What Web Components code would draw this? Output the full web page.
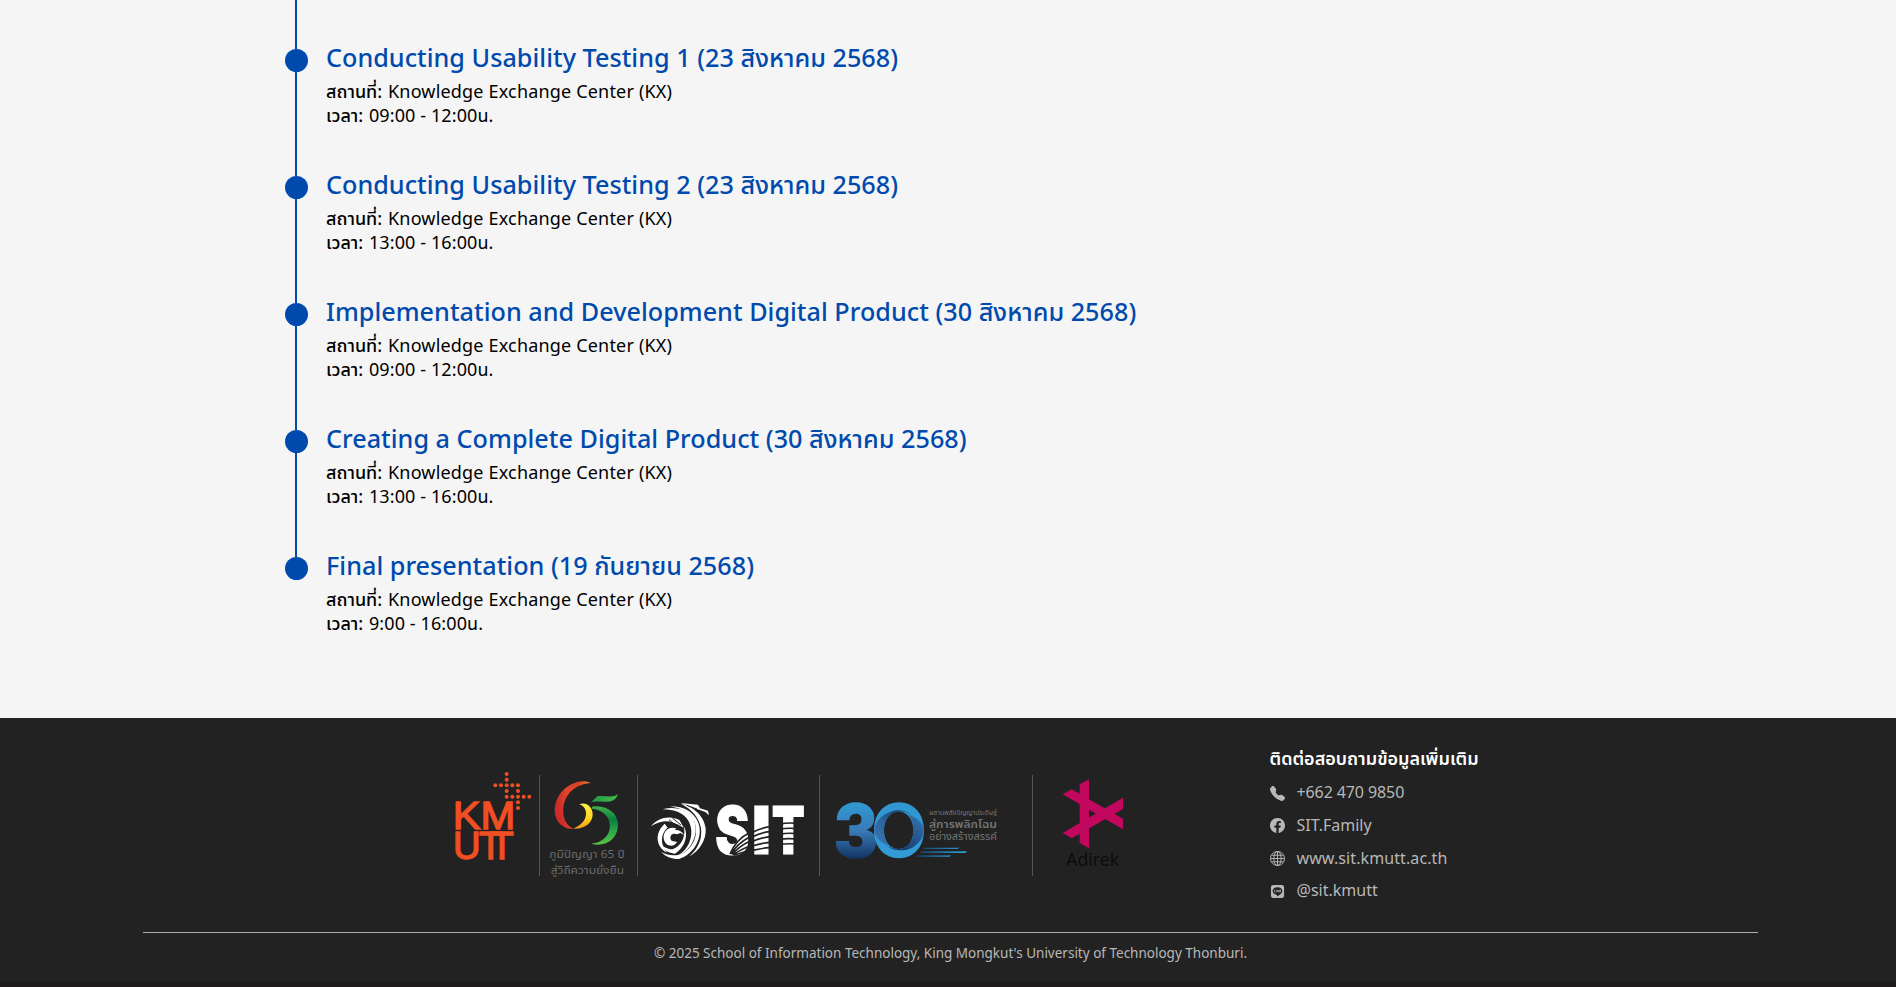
<!DOCTYPE html>
<html lang="th">
<head>
<meta charset="utf-8">
<title>School of Information Technology</title>
<style>
html,body{margin:0;background:#f5f5f5}
body{font-family:"Noto Sans","Noto Sans Thai",sans-serif;color:#000;height:987px;overflow:hidden}
</style>
</head>
<body>
<schedule-page></schedule-page>
<script>
const define=(name,html)=>customElements.define(name,class extends HTMLElement{
  constructor(){super();this.attachShadow({mode:'open'}).innerHTML=html}
});

customElements.define('timeline-item',class extends HTMLElement{
  constructor(){
    super();
    this.attachShadow({mode:'open'}).innerHTML=`<style>
    :host{display:grid;grid-template-columns:23px 1fr;column-gap:18px;height:127px;box-sizing:border-box}
    .rail{display:flex;flex-direction:column;align-items:center}
    .rail::before,.rail::after{content:"";width:2px;background:#004aad;margin-right:1px}
    .rail::before{height:16px}
    .rail::after{flex:1}
    :host([last]) .rail::after{visibility:hidden}
    .dot{width:23px;height:23px;border-radius:50%;background:#004aad;flex:none}
    .body{padding-top:6px}
    h3{margin:0;font-size:25.2px;line-height:36px;font-weight:500;color:#004aad;white-space:nowrap;letter-spacing:.02px}
    p{margin:0;font-size:18px;line-height:24px;white-space:nowrap;letter-spacing:.1px}
    b{font-weight:500;letter-spacing:0;margin-right:1px}
    .place{margin-top:4px;letter-spacing:.18px}
    </style><div class="rail"><div class="dot"></div></div>
    <div class="body"><h3><slot></slot></h3><p class="place"><b>สถานที่:</b> Knowledge Exchange Center (KX)</p><p><b>เวลา:</b> <slot name="time"></slot></p></div>`;
  }
});

define('logo-kmutt',`<style>:host{display:block;width:89px;height:110px}svg{display:block}</style>
<svg width="89" height="110" viewBox="450 770 89 110"><g transform="translate(440 755) scale(.33333)" fill="#f04e23">
<circle cx="200" cy="57" r="6"/><circle cx="200" cy="74" r="6"/><circle cx="166" cy="91" r="6"/><circle cx="183" cy="91" r="6"/><circle cx="200" cy="91" r="6"/><circle cx="217" cy="91" r="6"/><circle cx="234" cy="91" r="6"/><circle cx="200" cy="108" r="6"/><circle cx="234" cy="108" r="6"/><circle cx="200" cy="125" r="6"/><circle cx="217" cy="125" r="6"/><circle cx="234" cy="125" r="6"/><circle cx="251" cy="125" r="6"/><circle cx="268" cy="125" r="6"/><circle cx="234" cy="142" r="6"/><circle cx="234" cy="159" r="6"/>
<g font-family="Liberation Sans" font-size="115" stroke="#f04e23" stroke-width="4">
<text x="38" y="223" textLength="188" lengthAdjust="spacingAndGlyphs">KM</text>
<text x="39 117 151" y="313">UTT</text></g>
</g></svg>`);

define('logo-wisdom',`<style>:host{display:block;width:97px;height:110px}svg{display:block}</style>
<svg width="97" height="110" viewBox="540 770 97 110"><defs>
<linearGradient id="r" x1="0" x2="1" y1="0.3" y2="0"><stop stop-color="#cf2a2b"/><stop offset=".35" stop-color="#e0462b"/><stop offset=".65" stop-color="#d8402a"/><stop offset="1" stop-color="#ef7a2c"/></linearGradient>
<linearGradient id="y" x1="0" x2="0" y1="0" y2="1"><stop stop-color="#fff04a"/><stop offset=".6" stop-color="#ffd21a"/><stop offset="1" stop-color="#f59a1e"/></linearGradient>
<linearGradient id="g" x1="0" x2="0" y1="0" y2="1"><stop stop-color="#3fb14a"/><stop offset=".35" stop-color="#0b7f3f"/><stop offset=".65" stop-color="#2ca84a"/><stop offset="1" stop-color="#57c13f"/></linearGradient>
<linearGradient id="f"><stop stop-color="#1c9b47"/><stop offset="1" stop-color="#45bb4b"/></linearGradient></defs>
<g transform="translate(440 755) scale(.33333)">
<path fill="url(#r)" d="M452 84C430 72 392 82 368 107C338 139 337 187 363 209C374 219 389 223 402 221C379 213 368 190 370 162C372 125 398 89 452 84Z"/>
<path fill="url(#y)" d="M418 148C438 140 457 154 458 177C459 203 434 223 400 221C423 211 437 197 438 178C439 164 432 153 418 148Z"/>
<path fill="url(#f)" d="M452 143L472 124C495 121 519 130 534 117C527 140 509 141 488 140C474 139 461 139 452 143Z"/>
<path fill="url(#g)" d="M456 155C480 151 502 157 518 172C538 191 538 224 524 244C508 267 480 274 453 266C484 263 504 247 509 222C514 190 493 165 456 161Z"/>
<g font-family="Noto Sans,Noto Sans Thai,sans-serif" font-size="32" fill="#6b6b6b"><text x="328" y="310" textLength="226" lengthAdjust="spacingAndGlyphs">ภูมิปัญญา 65 ปี</text><text x="332" y="358" textLength="220" lengthAdjust="spacingAndGlyphs">สู่วิถีความยั่งยืน</text></g>
</g></svg>`);

define('logo-sit',`<style>:host{display:block;width:181px;height:110px}svg{display:block}</style>
<svg width="181" height="110" viewBox="638 770 181 110"><g transform="translate(640 780) scale(.33333)">
<g fill="#fff">
<path d="M68 88C105 78 145 88 161 119C180 158 154 213 115 226C151 205 164 158 146 124C132 98 102 88 68 88Z"/>
<path d="M91 80C133 76 173 102 179 144C183 184 157 224 117 237C99 238 75 230 64 216C88 229 114 230 136 215C164 194 175 160 164 126C152 99 124 83 91 80Z"/>
<path d="M123 71C160 79 193 108 197 145C200 180 177 215 148 229C176 205 187 176 183 145C177 111 154 87 123 71Z"/>
<path d="M57 183C65 199 81 208 98 208C124 199 139 168 131 139C148 165 133 205 105 221C83 220 62 205 57 183Z"/>
<path d="M33 139C54 112 91 105 119 121L131 143L112 133L95 126C80 121 55 124 33 139Z"/>
<path d="M74 131C45 157 45 199 81 218C60 193 61 160 83 143Z"/>
<path d="M109 145C84 136 66 158 72 180C78 201 104 202 111 186C104 184 95 186 92 178C88 165 99 157 111 163L121 159L132 165C125 154 113 148 104 151Z"/>
<path d="M122 69L174 74L180 85L204 92L207 106L196 96L164 85Z"/>
</g>
<g fill="none" stroke="#222" stroke-width="3"><path d="M87 119L113 142M97 114L123 135M140 76L171 87"/></g>
<g font-family="Inter" font-weight="900" font-size="196" fill="#fff" stroke="#fff" stroke-width="3"><text x="226" y="223" textLength="102" lengthAdjust="spacingAndGlyphs">S</text><text x="335" y="223" textLength="58" lengthAdjust="spacingAndGlyphs">I</text><text x="395" y="223" textLength="99" lengthAdjust="spacingAndGlyphs">T</text></g>
<g fill="none" stroke="#222" stroke-width="5">
<path d="M270 222C283 192 302 171 327 159M273 222C285 202 304 184 329 171M276 223C290 208 308 194 329 184M279 224C294 214 311 205 329 198M281 226C298 220 315 215 330 212"/>
<path d="M338 157Q362 144 389 140M338 170Q362 158 389 155M338 184Q362 174 389 170M338 198Q362 190 389 187M338 211Q362 205 389 203"/>
<path d="M418 133Q442 127 471 130M418 148Q442 143 471 146M418 163Q442 158 471 161M418 178Q442 174 471 177M418 193Q442 190 471 192"/>
</g></g></svg>`);

define('logo-thirty',`<style>:host{display:block;width:212px;height:110px}svg{display:block}</style>
<svg width="212" height="110" viewBox="820 770 212 110"><defs>
<linearGradient id="a" gradientUnits="userSpaceOnUse" x1="0" x2="0" y1="70" y2="235"><stop stop-color="#3199d3"/><stop offset=".5" stop-color="#397ab7"/><stop offset="1" stop-color="#123664"/></linearGradient>
<linearGradient id="b" x1="0" x2="0" y1="0" y2="1"><stop stop-color="#3196d0"/><stop offset="1" stop-color="#329bd5"/></linearGradient>
<linearGradient id="c" x1="0" x2="1" y1="1" y2="0"><stop stop-color="#3c79b6"/><stop offset=".45" stop-color="#2c65a0"/><stop offset="1" stop-color="#0c2c59"/></linearGradient>
<linearGradient id="e" x1="0" x2="1" y1="1" y2="0"><stop stop-color="#0c2c59"/><stop offset=".5" stop-color="#1f4f87"/><stop offset="1" stop-color="#397ab7"/></linearGradient>
<linearGradient id="l"><stop stop-color="#16365d"/><stop offset="1" stop-color="#2fa3e0"/></linearGradient></defs>
<g transform="translate(820 780) scale(.33333)">
<text x="41" y="231" font-family="Inter" font-weight="800" font-size="218" textLength="133" lengthAdjust="spacingAndGlyphs" fill="url(#a)" stroke="url(#a)" stroke-width="5">3</text>
<path fill="url(#b)" fill-rule="evenodd" d="M237 67C281 67 312 101 312 151S281 235 237 235S162 201 162 151S193 67 237 67ZM236 95C209 95 192 118 192 151S209 207 236 207S280 184 280 151S262 95 236 95Z"/>
<path fill="url(#c)" d="M162 151C168 118 195 95 231 91C252 91 268 98 278 112C265 96 250 94 236 95C209 95 192 118 192 151C191 170 198 187 207 196C182 190 166 174 162 151Z"/>
<path fill="url(#e)" d="M312 151C308 186 278 213 240 211C219 211 204 202 194 187C206 203 220 207 236 207C263 207 280 184 280 151C281 132 274 113 265 105C290 111 308 127 312 151Z"/>
<path fill="url(#l)" d="M309 203L418 203L413 207L309 207ZM304 214L441 214L436 219L301 219ZM292 226L394 226L388 231L287 231Z"/>
<g font-family="Noto Sans,Noto Sans Thai,sans-serif" fill="#747474"><text x="327" y="106" font-size="19" textLength="204" lengthAdjust="spacingAndGlyphs">ผสานพลังปัญญาประดิษฐ์</text><text x="327" y="145" font-size="34" font-weight="600" textLength="204" lengthAdjust="spacingAndGlyphs">สู่การพลิกโฉม</text><text x="327" y="180" font-size="31" textLength="204" lengthAdjust="spacingAndGlyphs">อย่างสร้างสรรค์</text></g>
</g></svg>`);

define('logo-adirek',`<style>:host{display:block;width:117px;height:110px}svg{display:block}</style>
<svg width="117" height="110" viewBox="1033 770 117 110"><g transform="translate(1020 760) scale(.33333)">
<path fill="#c2075e" d="M179 73L207 58V265L179 249ZM128 103L155 88L309 176V208ZM309 113V147L155 235L128 219Z"/>
<text x="139" y="317" font-family="Open Sans" font-size="56" fill="#0b0b0b" textLength="158" lengthAdjust="spacingAndGlyphs">Adirek</text>
</g></svg>`);

define('logo-strip',`<style>:host{display:flex;align-items:flex-start;width:700px;height:110px}i{width:1px;height:101px;margin-top:5px;background:#555;flex:none}
logo-kmutt,logo-wisdom,logo-sit,logo-thirty,logo-adirek{flex:none}</style>
<logo-kmutt></logo-kmutt><i></i><logo-wisdom></logo-wisdom><i></i><logo-sit></logo-sit><i></i><logo-thirty></logo-thirty><i></i><logo-adirek></logo-adirek>`);

const icons={
phone:'<path d="M1.885.511a1.745 1.745 0 0 1 2.61.163L6.29 2.98c.329.423.445.974.315 1.494l-.547 2.19a.68.68 0 0 0 .178.643l2.457 2.457a.68.68 0 0 0 .644.178l2.189-.547a1.75 1.75 0 0 1 1.494.315l2.306 1.794c.829.645.905 1.87.163 2.611l-1.034 1.034c-.74.74-1.846 1.065-2.877.702a18.6 18.6 0 0 1-7.01-4.42 18.6 18.6 0 0 1-4.42-7.009c-.362-1.03-.037-2.137.703-2.877z"/>',
facebook:'<path d="M16 8.049c0-4.446-3.582-8.05-8-8.05C3.58 0 0 3.603 0 8.05c0 4.017 2.926 7.347 6.75 7.951v-5.625H4.72V8.05h2.03V6.275c0-2.017 1.195-3.131 3.022-3.131.876 0 1.791.157 1.791.157v1.98h-1.009c-.993 0-1.303.621-1.303 1.258v1.51h2.218l-.354 2.326H9.25V16C13.074 15.396 16 12.066 16 8.049"/>',
globe:'<g fill="none" stroke="currentColor"><circle cx="8" cy="8" r="7.5"/><ellipse cx="8" cy="8" rx="3.9" ry="7.5"/><path d="M8 .5v15M.5 8h15M1.7 4.5h12.6M1.7 11.5h12.6"/></g>',
line:'<path fill-rule="evenodd" d="M4 1h8.5A2.5 2.5 0 0 1 15 3.5V12.5A2.5 2.5 0 0 1 12.5 15H3.5A2.5 2.5 0 0 1 1 12.5V3.5A2.5 2.5 0 0 1 3.5 1ZM8 3.4c-3 0-5.2 1.8-5.2 4.1 0 2 1.8 3.7 4.3 4 .7.1.3.9.3 1.5 0 .4 1.5-.3 3.4-1.8 1.5-1.1 2.4-2.3 2.4-3.7C13.2 5.2 11 3.4 8 3.4Z"/><path d="M4.500 6.200h.7v2h1v.6H4.500zM6.700 6.200h.6v2.600h-.6zM7.800 6.200h.5l1 1.400V6.200h.6v2.600h-.5l-1-1.400v1.400h-.6zM10.300 6.200h1.500v.6h-.9v.4h.9v.6h-.9v.4h.9v.6h-1.500z"/>'
};
customElements.define('contact-row',class extends HTMLElement{
  constructor(){super();this.attachShadow({mode:'open'})}
  connectedCallback(){this.shadowRoot.innerHTML=`<style>:host{display:flex;align-items:center;gap:12px;height:32.67px;font-size:16px;line-height:24px;color:#b8b8b8;white-space:nowrap}:host([icon=phone]){letter-spacing:-.1px}:host([icon=globe]){letter-spacing:.1px}svg{width:15px;height:15px;flex:none;margin-top:2px}</style>
  <svg viewBox="0 0 16 16" fill="currentColor">${icons[this.getAttribute('icon')]}</svg><span><slot></slot></span>`}
});

define('site-footer',`<style>
:host{display:block;height:269px;background:#222;box-sizing:border-box;border-bottom:5px solid #1f1a1c}
.top{display:flex;height:214px;box-sizing:border-box;padding-left:450px}
logo-strip{margin-top:52px}
.contact{margin-left:119.5px;padding-top:26px}
h4{margin:0 0 4px;font-size:18px;line-height:28px;font-weight:600;color:#fff;white-space:nowrap}
.legal{margin:0 138px 0 143px;border-top:1px solid #b0b0b0;text-align:center;font-size:13.5px;line-height:20px;color:#b8b8b8;padding-top:10px}
</style>
<div class="top"><logo-strip></logo-strip><div class="contact"><h4>ติดต่อสอบถามข้อมูลเพิ่มเติม</h4>
<contact-row icon="phone">+662 470 9850</contact-row><contact-row icon="facebook">SIT.Family</contact-row><contact-row icon="globe">www.sit.kmutt.ac.th</contact-row><contact-row icon="line">@sit.kmutt</contact-row></div></div>
<div class="legal">© 2025 School of Information Technology, King Mongkut's University of Technology Thonburi.</div>`);

define('schedule-page',`<style>
:host{display:flex;flex-direction:column;height:987px}
main{height:718px;box-sizing:border-box;padding:0 0 0 285px}
.lead{width:2px;height:33px;margin-left:10px;background:#004aad}
</style>
<main><div class="lead"></div>
<timeline-item>Conducting Usability Testing 1 (23 สิงหาคม 2568)<span slot="time">09:00 - 12:00น.</span></timeline-item>
<timeline-item>Conducting Usability Testing 2 (23 สิงหาคม 2568)<span slot="time">13:00 - 16:00น.</span></timeline-item>
<timeline-item>Implementation and Development Digital Product (30 สิงหาคม 2568)<span slot="time">09:00 - 12:00น.</span></timeline-item>
<timeline-item>Creating a Complete Digital Product (30 สิงหาคม 2568)<span slot="time">13:00 - 16:00น.</span></timeline-item>
<timeline-item last>Final presentation (19 กันยายน 2568)<span slot="time">9:00 - 16:00น.</span></timeline-item>
</main><site-footer></site-footer>`);
</script>
</body>
</html>
